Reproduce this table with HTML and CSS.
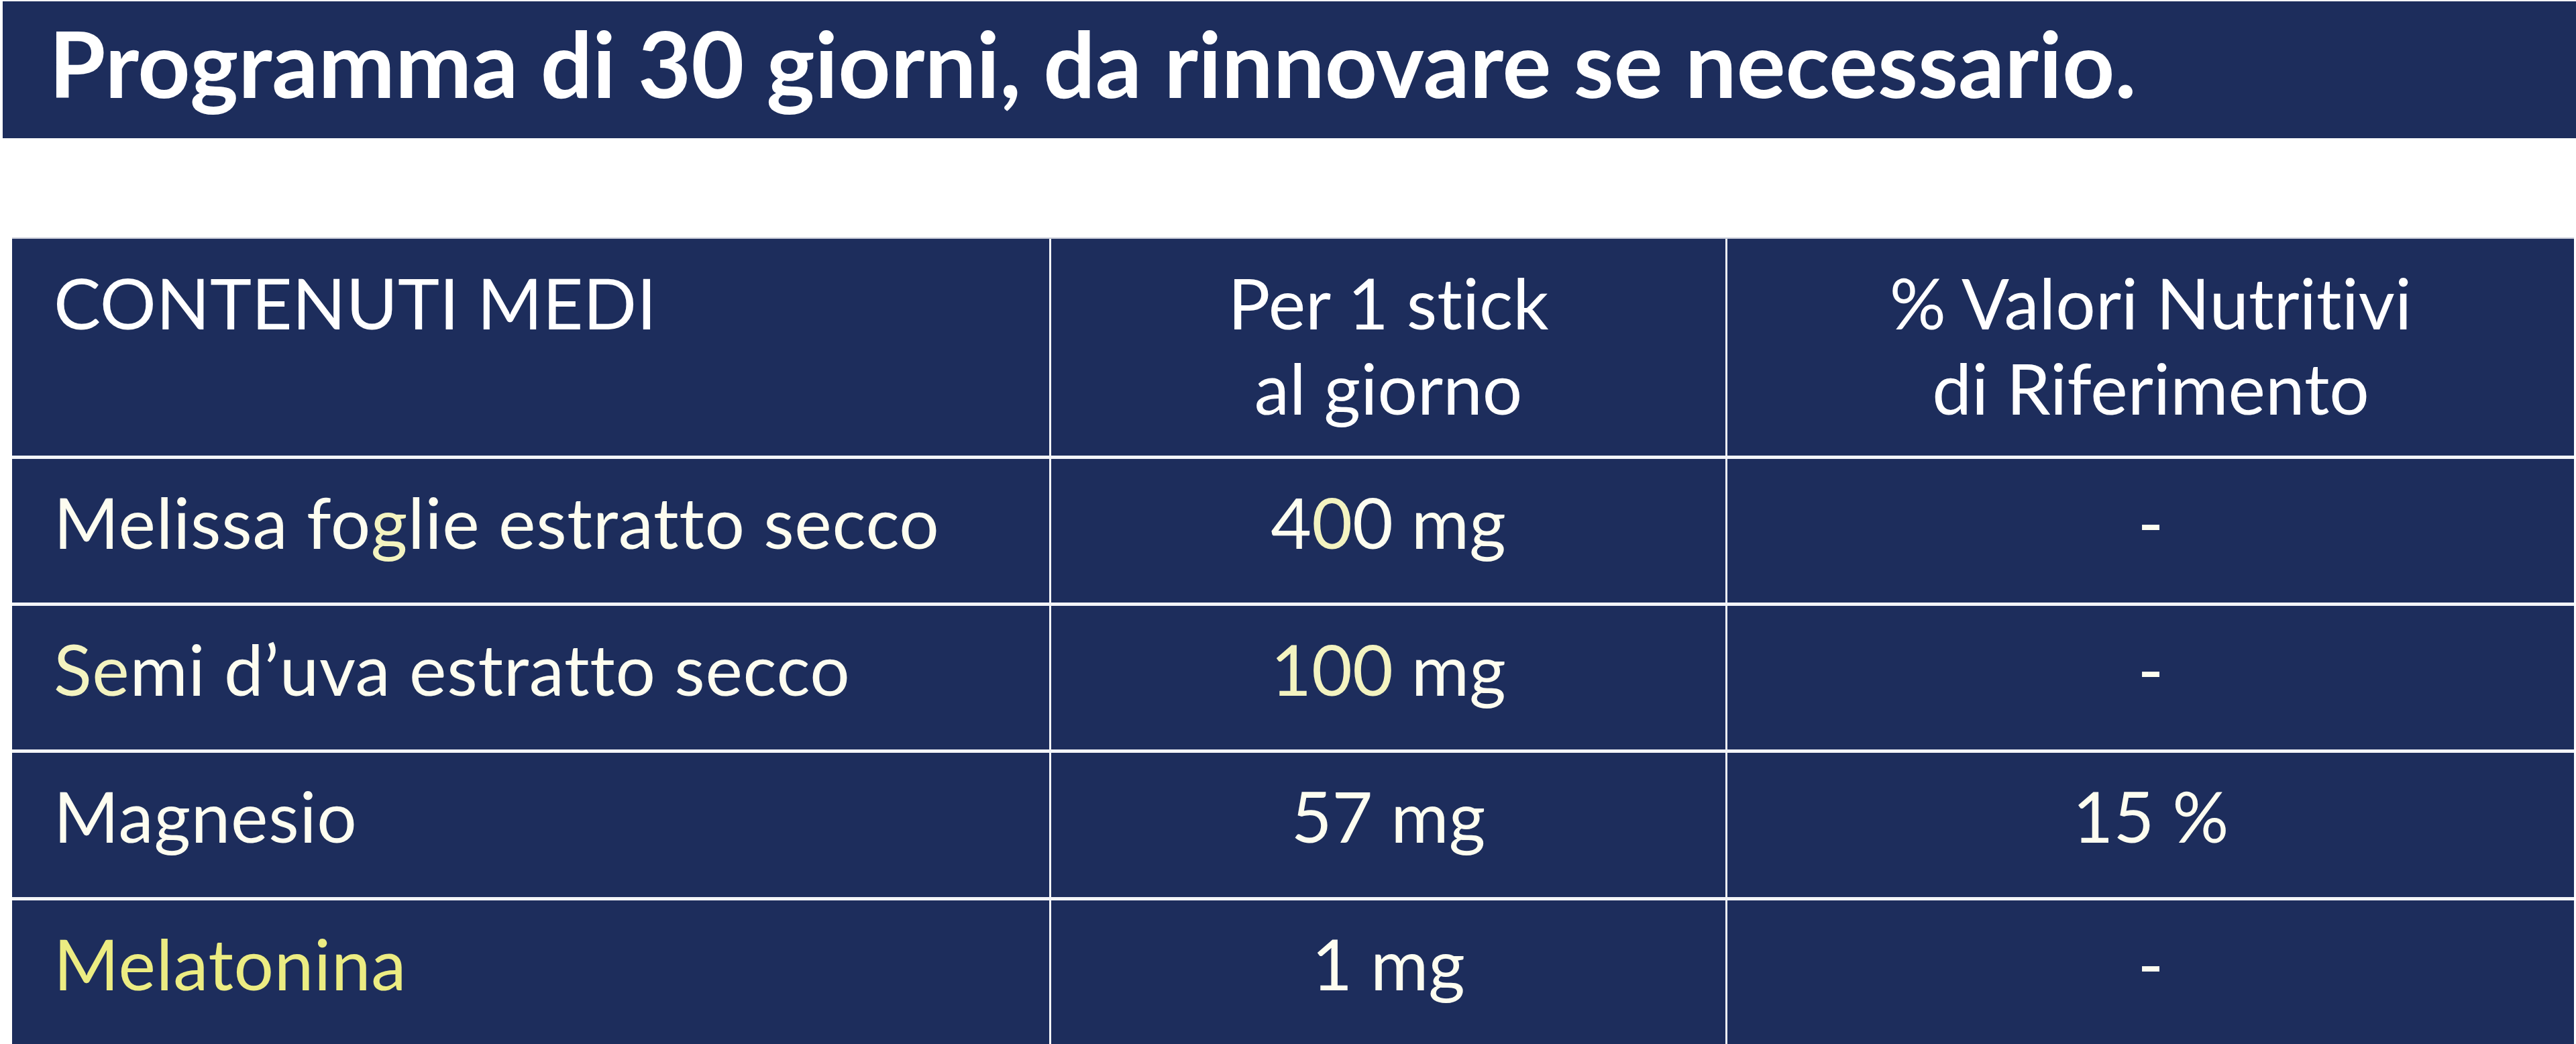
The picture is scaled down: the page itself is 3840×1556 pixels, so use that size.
FILE: index.html
```html
<!DOCTYPE html>
<html lang="it">
<head>
<meta charset="utf-8">
<title>Programma di 30 giorni</title>
<link rel="stylesheet" href="styles.css">
</head>
<body>
<div class="page">
  <div class="banner">
    <h1 class="banner-title">Programma di 30 giorni, da rinnovare se necessario.</h1>
  </div>
  <div class="table" role="table">
    <div class="cell head first" role="columnheader">CONTENUTI MEDI</div>
    <div class="cell head center" role="columnheader">Per 1 stick<br>al giorno</div>
    <div class="cell head center" role="columnheader">% Valori Nutritivi<br>di Riferimento</div>

    <div class="cell first item" role="cell">Melissa fo<span class="tint">g</span>lie estratto secco</div>
    <div class="cell center" role="cell">4<span class="tint">0</span>0 mg</div>
    <div class="cell center" role="cell">-</div>

    <div class="cell first item" role="cell"><span class="tint">Se</span>mi d’uva estratto secco</div>
    <div class="cell center" role="cell"><span class="tint">100</span> mg</div>
    <div class="cell center" role="cell">-</div>

    <div class="cell first item" role="cell">Magnesio</div>
    <div class="cell center" role="cell">57 mg</div>
    <div class="cell center" role="cell">15 %</div>

    <div class="cell first item yellow" role="cell">Melatonina</div>
    <div class="cell center" role="cell">1 mg</div>
    <div class="cell center" role="cell">-</div>
  </div>
</div>
</body>
</html>
```
FILE: styles.css
```css
html, body {
  margin: 0;
  padding: 0;
  background: #ffffff;
}

body {
  width: 3840px;
  height: 1556px;
  overflow: hidden;
  font-family: Lato, "Open Sans", sans-serif;
  font-variant-ligatures: none;
  font-feature-settings: "liga" 0, "clig" 0;
}

.page {
  display: flex;
  flex-direction: column;
  padding-top: 2px;
}

.banner {
  margin-left: 4px;
  height: 204px;
  box-sizing: border-box;
  background: #1d2d5c;
  padding: 10px 0 0 69px;
}

.banner-title {
  margin: 0;
  font-family: Lato, sans-serif;
  font-weight: 700;
  font-size: 136.5px;
  line-height: 162px;
  color: #ffffff;
  white-space: nowrap;
}

.table {
  margin-top: 148px;
  margin-left: 18px;
  width: 3819px;
  display: grid;
  grid-template-columns: 1546px 1005px 1262px;
  grid-template-rows: 323px 214px 214px 215px 220px;
  column-gap: 3px;
  row-gap: 5px;
  background: #f3f4f8;
  border-top: 2px solid #c3c7d4;
}

.cell {
  background: #1d2d5c;
  color: #fdfdf0;
  font-size: 105px;
  line-height: 127px;
  padding-top: 30px;
  box-sizing: border-box;
  white-space: nowrap;
}

.cell.head {
  color: #ffffff;
  padding-top: 31px;
}

.first {
  padding-left: 62px;
}

.item {
  letter-spacing: 0.7px;
}

.center {
  text-align: center;
}

.tint {
  color: #f3f3c0;
}

.yellow {
  color: #ecec82;
}
```
